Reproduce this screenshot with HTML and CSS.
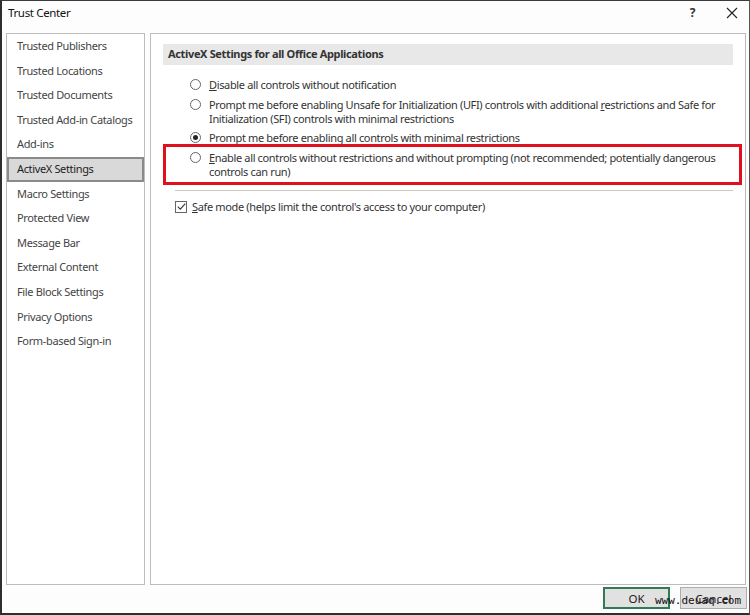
FILE: index.html
```html
<!DOCTYPE html>
<html>
<head>
<meta charset="utf-8">
<link rel="stylesheet" href="styles.css">
</head>
<body>
<div class="window">
  <div class="titlebar">
    <span class="title">Trust Center</span>
    <span class="help">?</span>
    <span class="close">
      <svg width="12" height="12" viewBox="0 0 12 12"><path d="M1 1 L11 11 M11 1 L1 11" stroke="#222" stroke-width="1.1" fill="none"/></svg>
    </span>
  </div>
  <div class="main">
    <ul class="nav">
      <li>Trusted Publishers</li>
      <li>Trusted Locations</li>
      <li>Trusted Documents</li>
      <li>Trusted Add-in Catalogs</li>
      <li>Add-ins</li>
      <li class="active">ActiveX Settings</li>
      <li>Macro Settings</li>
      <li>Protected View</li>
      <li>Message Bar</li>
      <li>External Content</li>
      <li>File Block Settings</li>
      <li>Privacy Options</li>
      <li>Form-based Sign-in</li>
    </ul>
    <div class="content">
      <div class="section-head">ActiveX Settings for all Office Applications</div>
      <div class="options">
        <div class="opt"><span class="radio"></span><span class="label"><u>D</u>isable all controls without notification</span></div>
        <div class="opt"><span class="radio"></span><span class="label">Prompt me before enabling Unsafe for Initialization (UFI) controls with additional <u>r</u>estrictions and Safe for Initialization (SFI) controls with minimal restrictions</span></div>
        <div class="opt"><span class="radio checked"></span><span class="label focus">Prompt me before enabling all controls with minimal restrictions</span></div>
        <div class="highlight">
          <div class="opt"><span class="radio"></span><span class="label"><u>E</u>nable all controls without restrictions and without prompting (not recommended; potentially dangerous controls can run)</span></div>
        </div>
      </div>
      <div class="sep"></div>
      <div class="check-row">
        <span class="checkbox"><svg width="9" height="9" viewBox="0 0 9 9"><path d="M0.8 4.6 L3.3 7.1 L8.3 1.6" stroke="#333" stroke-width="1.1" fill="none"/></svg></span>
        <span class="label"><u>S</u>afe mode (helps limit the control's access to your computer)</span>
      </div>
    </div>
  </div>
  <div class="footer">
    <button class="btn ok">OK</button>
    <button class="btn">Cancel</button>
  </div>
  <div class="watermark">www.deuaq.com</div>
</div>
</body>
</html>
```

FILE: styles.css
```css
* { box-sizing: border-box; }
html, body { margin: 0; padding: 0; }
body {
  width: 750px;
  height: 615px;
  overflow: hidden;
  background: #fff;
  font-family: "Segoe UI", "Noto Sans", "Open Sans", sans-serif;
  font-size: 11px;
  letter-spacing: -0.35px;
  color: #333;
}
.window {
  position: relative;
  width: 750px;
  height: 615px;
  border-top: 1px solid #3a3a3a;
  border-left: 2px solid #2e2e2e;
  border-right: 1px solid #555;
  border-bottom: 2px solid #2e2e2e;
  background: #fdfdfd;
  display: flex;
  flex-direction: column;
}
.titlebar {
  height: 32px;
  display: flex;
  align-items: flex-start;
  padding: 4px 0 0 6px;
  color: #111;
}
.title { font-size: 11.5px; flex: 1; }
.help { font-weight: bold; font-size: 12px; margin-right: 31px; margin-top: -1px; color: #333; }
.close { margin-right: 11px; margin-top: 2px; }
.main {
  display: flex;
  padding-left: 4px;
  gap: 5px;
  height: 552px;
}
.nav {
  list-style: none;
  margin: 0;
  padding: 0;
  width: 139px;
  border: 1px solid #bcbcbc;
  background: #fff;
  padding-top: 0;
}
.nav li {
  height: 24.6px;
  line-height: 24px;
  padding-left: 10px;
  color: #444;
  white-space: nowrap;
}
.nav li.active {
  background: #d9d9d9;
  border: 2px solid #8a8a8a;
  padding-left: 8px;
  line-height: 20px;
  color: #222;
}
.content {
  width: 596px;
  border: 1px solid #bcbcbc;
  background: #fff;
  padding: 10px 12px 0 12px;
}
.section-head {
  height: 21px;
  line-height: 20px;
  background: #e8e8e8;
  padding-left: 5px;
  font-weight: bold;
  color: #333;
}
.options {
  padding-top: 13px;
  display: flex;
  flex-direction: column;
  gap: 5.5px;
}
.opt {
  display: flex;
  align-items: flex-start;
  padding-left: 27px;
  line-height: 14px;
}
.radio {
  flex: none;
  width: 11px;
  height: 11px;
  border: 1px solid #666;
  border-radius: 50%;
  margin-top: 1px;
  margin-right: 8px;
  background: #fff;
  position: relative;
}
.radio.checked::after {
  content: "";
  position: absolute;
  left: 2px; top: 2px;
  width: 5px; height: 5px;
  border-radius: 50%;
  background: #222;
}
.label { color: #333; }
.label.focus { border-bottom: 1px dotted #444; }
.highlight {
  border: 3px solid #e0101e;
  margin-right: -9px;
  margin-top: -8px;
  padding: 4px 0 3px 0;
}
.highlight .opt { padding-left: 24px; }
.sep {
  height: 1px;
  background: #c9c9c9;
  margin: 5px 0 0 12px;
}
.check-row {
  display: flex;
  align-items: center;
  padding-left: 12px;
  margin-top: 9px;
  line-height: 14px;
}
.checkbox {
  width: 12px;
  height: 12px;
  border: 1px solid #666;
  background: #fff;
  display: flex;
  align-items: center;
  justify-content: center;
  margin-right: 5px;
}
.footer {
  display: flex;
  justify-content: flex-end;
  gap: 10px;
  padding: 2px 2px 0 0;
}
.btn {
  width: 67px;
  height: 22px;
  font-family: inherit;
  font-size: 11.5px;
  letter-spacing: 0;
  color: #222;
  background: #e1e1e1;
  border: 1px solid #adadad;
  padding: 0;
}
.btn.ok { border: 2px solid #2e7b55; }
.watermark {
  position: absolute;
  left: 653px;
  top: 593px;
  font-family: "DejaVu Sans Mono", monospace;
  font-size: 11px;
  letter-spacing: 0;
  color: #111;
}
```
